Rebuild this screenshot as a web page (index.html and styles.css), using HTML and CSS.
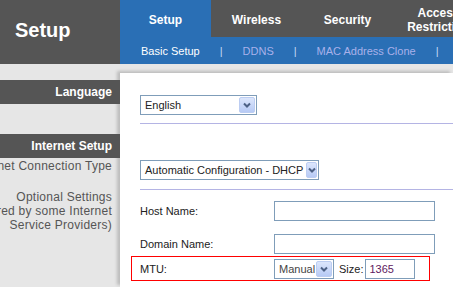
FILE: index.html
```html
<!DOCTYPE html>
<html lang="en">

<head>
    <meta charset="utf-8" />
    <title>Setup</title>
    <link rel="stylesheet" href="styles.css">
</head>

<body>
    <div class="header">
        <div class="logo">Setup</div>
        <div class="nav">
            <div class="tabs">
                <div class="tab active">Setup</div>
                <div class="tab">Wireless</div>
                <div class="tab">Security</div>
                <div class="tab">Access<br>Restriction</div>
            </div>
            <div class="subnav">
                <span class="sub current">Basic Setup</span>
                <span class="sep">|</span>
                <span class="sub">DDNS</span>
                <span class="sep">|</span>
                <span class="sub">MAC Address Clone</span>
                <span class="sep">|</span>
            </div>
        </div>
    </div>
    <div class="main">
        <div class="side">
            <div class="band band-lang">Language</div>
            <div class="band band-inet">Internet Setup</div>
            <div class="side-text conn">Internet Connection Type</div>
            <div class="side-text optional">Optional Settings<br>(required by some Internet<br>Service Providers)</div>
        </div>
        <div class="panel">
            <div class="select sel-lang">
                <span class="sel-value">English</span>
                <span class="arrow"><svg width="8" height="6" viewBox="0 0 8 6"><path d="M1 1.5 L4 4.5 L7 1.5" fill="none" stroke="#4d6185" stroke-width="2"/></svg></span>
            </div>
            <div class="rule rule-1"></div>
            <div class="select sel-type">
                <span class="sel-value">Automatic Configuration - DHCP</span>
                <span class="arrow"><svg width="8" height="6" viewBox="0 0 8 6"><path d="M1 1.5 L4 4.5 L7 1.5" fill="none" stroke="#4d6185" stroke-width="2"/></svg></span>
            </div>
            <div class="rule rule-2"></div>
            <div class="field field-host">
                <span class="label">Host Name:</span>
                <span class="input wide"></span>
            </div>
            <div class="field field-domain">
                <span class="label">Domain Name:</span>
                <span class="input wide"></span>
            </div>
            <div class="field mtu">
                <span class="label">MTU:</span>
                <div class="select sel-mtu">
                    <span class="sel-value">Manual</span>
                    <span class="arrow"><svg width="8" height="6" viewBox="0 0 8 6"><path d="M1 1.5 L4 4.5 L7 1.5" fill="none" stroke="#4d6185" stroke-width="2"/></svg></span>
                </div>
                <span class="size-label">Size:</span>
                <span class="input size">1365</span>
            </div>
        </div>
    </div>
</body>

</html>
```

FILE: styles.css
```css
html,
body {
    margin: 0;
    height: 100%;
}

body {
    background: #e6e6e6;
    font-family: "Liberation Sans", Arial, sans-serif;
    overflow: hidden;
}

.header {
    display: flex;
    height: 64px;
}

.logo {
    width: 120px;
    flex: none;
    box-sizing: border-box;
    padding: 0 0 3px 15px;
    display: flex;
    align-items: center;
    background: #555555;
    color: #fff;
    font-size: 20px;
    font-weight: bold;
}

.nav {
    flex: 1;
    display: flex;
    flex-direction: column;
}

.tabs {
    height: 37px;
    display: flex;
    background: #555555;
}

.tab {
    width: 91px;
    flex: none;
    display: flex;
    align-items: center;
    justify-content: center;
    text-align: center;
    padding-top: 3px;
    box-sizing: border-box;
    color: #fff;
    font-size: 12px;
    font-weight: bold;
    line-height: 14px;
}

.tab.active {
    background: #2a6fb5;
}

.subnav {
    height: 27px;
    display: flex;
    align-items: center;
    gap: 20px;
    padding-left: 21px;
    background: #2a6fb5;
    font-size: 11px;
    white-space: nowrap;
}

.sub {
    color: #a9b1ea;
}

.sub.current {
    color: #fff;
}

.sep {
    color: #c6dcf5;
}

.main {
    display: flex;
    height: calc(100% - 64px);
}

.side {
    width: 120px;
    flex: none;
    position: relative;
    z-index: 1;
    display: flex;
    flex-direction: column;
    align-items: flex-end;
}

.band {
    width: 120px;
    height: 24px;
    box-sizing: border-box;
    padding-right: 8px;
    display: flex;
    align-items: center;
    justify-content: flex-end;
    background: #555555;
    color: #fff;
    font-size: 12px;
    font-weight: bold;
}

.band-lang {
    margin-top: 16px;
}

.band-inet {
    margin-top: 30px;
}

.side-text {
    padding-right: 8px;
    color: #555555;
    font-size: 12px;
    line-height: 14px;
    letter-spacing: 0.25px;
    text-align: right;
    white-space: nowrap;
}

.conn {
    margin-top: 1px;
}

.optional {
    margin-top: 17px;
}

.panel {
    flex: 1;
    margin-top: 9px;
    padding: 22px 0 0 20px;
    background: #fff;
    box-shadow: -3px -2px 3px rgba(0, 0, 0, 0.18);
    font-size: 11px;
    color: #222;
}

.select {
    height: 20px;
    box-sizing: border-box;
    display: flex;
    align-items: center;
    justify-content: space-between;
    border: 1px solid #7f9db9;
    background: #fff;
    padding: 0 1px 0 4px;
    white-space: nowrap;
}

.arrow {
    width: 16px;
    height: 16px;
    box-sizing: border-box;
    display: flex;
    align-items: center;
    justify-content: center;
    border: 1px solid #bccdf2;
    border-radius: 2px;
    background: linear-gradient(#dce6fc, #b7caf5);
}

.sel-lang {
    width: 117px;
}

.sel-type {
    width: 179px;
    margin-top: 36px;
}

.sel-type .sel-value {
    margin-right: 3px;
}

.rule {
    height: 1px;
    background: #b4b4e4;
}

.rule-1 {
    margin-top: 8px;
}

.rule-2 {
    margin-top: 9px;
}

.field {
    display: flex;
    align-items: center;
}

.label {
    width: 134px;
    flex: none;
}

.input {
    height: 20px;
    box-sizing: border-box;
    border: 1px solid #7f9db9;
    background: #fff;
}

.input.wide {
    width: 161px;
}

.field-host {
    margin-top: 11px;
}

.field-domain {
    margin-top: 13px;
}

.mtu {
    width: 299px;
    height: 25px;
    box-sizing: border-box;
    margin: 2px 0 0 -9px;
    padding-left: 8px;
    border: 1px solid #ff0000;
}

.sel-mtu {
    width: 60px;
    color: #444;
}

.size-label {
    margin-left: 5px;
}

.input.size {
    width: 50px;
    margin-left: 2px;
    padding-left: 3px;
    display: flex;
    align-items: center;
    color: #602060;
}
```
